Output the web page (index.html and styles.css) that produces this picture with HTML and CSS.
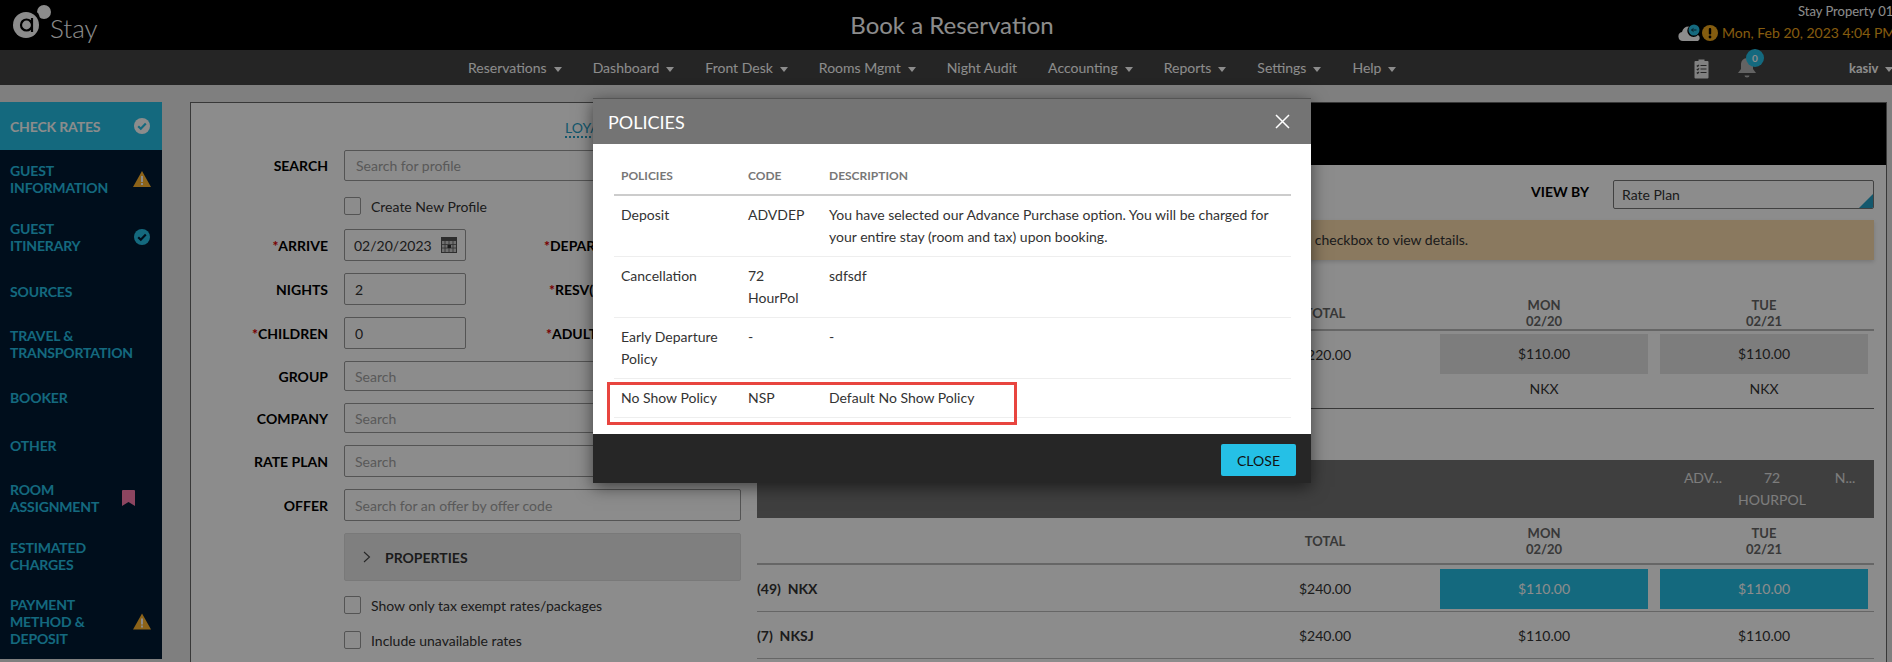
FILE: index.html
```html
<!DOCTYPE html>
<html lang="en">
<head>
<meta charset="utf-8">
<title>Book a Reservation</title>
<link rel="stylesheet" href="styles.css">
</head>
<body>
<header class="topbar">
  <div class="logo">
    <svg class="logo-mark" width="40" height="34" viewBox="0 0 40 34"><circle cx="13" cy="20" r="13" fill="#fff"/><circle cx="31" cy="7" r="7" fill="#fff"/><path d="M19 13v14M19 20a5.500 5.500 0 1 1-11 0 5.500 5.500 0 0 1 11 0z" fill="none" stroke="#000" stroke-width="2.200"/><path d="M24 8a13 13 0 0 1 2 7" fill="none" stroke="#000" stroke-width="2"/></svg>
    <span class="logo-text">Stay</span>
  </div>
  <h1 class="page-title">Book a Reservation</h1>
  <div class="prop">
    <div class="prop-name">Stay Property 01</div>
    <div class="prop-date">
      <svg width="24" height="18" viewBox="0 0 24 18"><path d="M5 17a4.500 4.500 0 0 1-1-8.900A7 7 0 0 1 11 2.500a6 6 0 0 0 9 8.500 3.500 3.500 0 0 1 0 6z" fill="#fff"/><circle cx="16" cy="6" r="5.500" fill="#25c0e6"/><path d="M13.500 6h5M13.500 6l2-1.600M13.500 6l2 1.600" stroke="#0a3a4a" stroke-width="1" fill="none"/></svg>
      <svg width="16" height="16" viewBox="0 0 16 16"><circle cx="8" cy="8" r="8" fill="#f0a81d"/><rect x="6.800" y="3" width="2.400" height="6.500" rx="1" fill="#000"/><circle cx="8" cy="12" r="1.400" fill="#000"/></svg>
      <span>Mon, Feb 20, 2023 4:04 PM</span>
    </div>
  </div>
</header>
<nav class="navbar">
  <ul class="menu">
    <li class="caret">Reservations</li>
    <li class="caret">Dashboard</li>
    <li class="caret">Front Desk</li>
    <li class="caret">Rooms Mgmt</li>
    <li>Night Audit</li>
    <li class="caret">Accounting</li>
    <li class="caret">Reports</li>
    <li class="caret">Settings</li>
    <li class="caret">Help</li>
  </ul>
  <div class="nav-right">
    <svg class="nav-clip" width="15" height="21" viewBox="0 0 15 21"><path d="M1.500 3h3V1.500h6V3h3a1 1 0 0 1 1 1v15.500a1 1 0 0 1-1 1h-12a1 1 0 0 1-1-1V4a1 1 0 0 1 1-1z" fill="#fff"/><path d="M6.500 7.500h6M6.500 11h6M6.500 14.500h6M2.800 7.500l1 1 1.200-1.800M2.800 11l1 1 1.200-1.800M2.800 14.500l1 1 1.200-1.800" stroke="#444" stroke-width="1.100" fill="none"/></svg>
    <div class="bell">
      <svg width="18" height="22" viewBox="0 0 18 22"><path d="M9 1a6 6 0 0 1 6 6v5l3 4H0l3-4V7a6 6 0 0 1 6-6z" fill="#fff" opacity=".6"/><path d="M6.500 18.500h5a2.500 2 0 0 1-5 0z" fill="#fff" opacity=".6"/></svg>
      <span class="badge">0</span>
    </div>
    <div class="user caret">kasiv</div>
  </div>
</nav>
<div class="page">
  <aside class="sidebar">
    <div class="step step-active"><span>CHECK RATES</span><svg class="ic" width="16" height="16" viewBox="0 0 16 16"><circle cx="8" cy="8" r="8" fill="#fff"/><path d="M4.200 8.200l2.600 2.600 5-5.200" fill="none" stroke="#25c0e6" stroke-width="2.200"/></svg></div>
    <div class="step"><span>GUEST<br>INFORMATION</span><svg class="ic warn" width="18" height="16" viewBox="0 0 18 16"><path d="M9 0l9 16H0z" fill="#ffb52e"/><rect x="8" y="5" width="2" height="6" fill="#fff"/><rect x="8" y="12" width="2" height="2" fill="#fff"/></svg></div>
    <div class="step"><span>GUEST<br>ITINERARY</span><svg class="ic" width="16" height="16" viewBox="0 0 16 16"><circle cx="8" cy="8" r="8" fill="#25c0e6"/><path d="M4.200 8.200l2.600 2.600 5-5.200" fill="none" stroke="#001a33" stroke-width="2.200"/></svg></div>
    <div class="step"><span>SOURCES</span></div>
    <div class="step"><span>TRAVEL &amp;<br>TRANSPORTATION</span></div>
    <div class="step"><span>BOOKER</span></div>
    <div class="step"><span>OTHER</span></div>
    <div class="step"><span>ROOM<br>ASSIGNMENT</span><svg class="ic mark" width="13" height="16" viewBox="0 0 13 16"><path d="M0 1a1 1 0 0 1 1-1h11a1 1 0 0 1 1 1v15l-6.500-4L0 16z" fill="#ff7fb0"/></svg></div>
    <div class="step"><span>ESTIMATED<br>CHARGES</span></div>
    <div class="step"><span>PAYMENT<br>METHOD &amp;<br>DEPOSIT</span><svg class="ic warn" width="18" height="17" viewBox="0 0 18 16"><path d="M9 0l9 16H0z" fill="#ffb52e"/><rect x="8" y="5" width="2" height="6" fill="#fff"/><rect x="8" y="12" width="2" height="2" fill="#fff"/></svg></div>
  </aside>
  <main class="panel">
    <section class="search-col">
      <div class="loyalty"><a class="loyalty-link">LOYALTY</a></div>
      <form class="form">
        <div class="row"><label class="lbl">SEARCH</label><input class="field field-top" placeholder="Search for profile"></div>
        <div class="check row-create"><span class="box"></span><span>Create New Profile</span></div>
        <div class="row"><label class="lbl"><b class="req">*</b>ARRIVE</label><div class="date-field"><span>02/20/2023</span><svg width="16" height="16" viewBox="0 0 16 16"><rect x=".5" y=".5" width="15" height="15" fill="#ccc" stroke="#555"/><rect x=".5" y=".5" width="15" height="3.500" fill="#555"/><path d="M4 4v11M8 4v11M12 4v11M1 7.500h14M1 11h14" stroke="#555" stroke-width=".8"/><rect x="6.500" y="8" width="3.500" height="3" fill="#333"/></svg></div><label class="lbl2 lbl2-dep"><b class="req">*</b>DEPARTURE</label></div>
        <div class="row"><label class="lbl">NIGHTS</label><input class="field field-short" value="2"><label class="lbl2 lbl2-resv"><b class="req">*</b>RESV(S)</label></div>
        <div class="row"><label class="lbl"><b class="req">*</b>CHILDREN</label><input class="field field-short" value="0"><label class="lbl2 lbl2-adu"><b class="req">*</b>ADULTS</label></div>
        <div class="row"><label class="lbl">GROUP</label><input class="field field-thin" placeholder="Search"></div>
        <div class="row"><label class="lbl">COMPANY</label><input class="field field-thin" placeholder="Search"></div>
        <div class="row"><label class="lbl">RATE PLAN</label><input class="field" placeholder="Search"></div>
        <div class="row"><label class="lbl">OFFER</label><input class="field" placeholder="Search for an offer by offer code"></div>
        <div class="props"><svg width="8" height="12" viewBox="0 0 8 12"><path d="M1 1l5.500 5L1 11" fill="none" stroke="#444" stroke-width="1.100"/></svg><span>PROPERTIES</span></div>
        <div class="check row-tax"><span class="box"></span><span>Show only tax exempt rates/packages</span></div>
        <div class="check row-inc"><span class="box"></span><span>Include unavailable rates</span></div>
      </form>
    </section>
    <section class="rates-col">
      <div class="band"></div>
      <div class="rates">
        <div class="viewby"><span class="viewby-lbl">VIEW BY</span><div class="select">Rate Plan</div></div>
        <div class="alert">Select a rate plan checkbox to view details.</div>
        <div class="grid grid-head grid-head-a">
          <div class="th-total">TOTAL</div>
          <div class="th-day day-a">MON<br><span>02/20</span></div>
          <div class="th-day day-b">TUE<br><span>02/21</span></div>
        </div>
        <div class="grid grid-sel">
          <div class="td-total">$220.00</div>
          <div class="cell cell-grey day-a">$110.00</div>
          <div class="cell cell-grey day-b">$110.00</div>
          <div class="code day-a">NKX</div>
          <div class="code day-b">NKX</div>
        </div>
        <div class="bar">
          <span class="bar-a">ADV...</span>
          <span class="bar-b">72<br>HOURPOL</span>
          <span class="bar-c">N...</span>
        </div>
        <div class="grid grid-head grid-head-b">
          <div class="th-total">TOTAL</div>
          <div class="th-day day-a">MON<br><span>02/20</span></div>
          <div class="th-day day-b">TUE<br><span>02/21</span></div>
        </div>
        <div class="grid grid-row">
          <div class="td-name"><b>(49)&nbsp; NKX</b></div>
          <div class="td-total">$240.00</div>
          <div class="cell cell-teal day-a">$110.00</div>
          <div class="cell cell-teal day-b">$110.00</div>
        </div>
        <div class="grid grid-row">
          <div class="td-name"><b>(7)&nbsp; NKSJ</b></div>
          <div class="td-total">$240.00</div>
          <div class="cell day-a">$110.00</div>
          <div class="cell day-b">$110.00</div>
        </div>
      </div>
    </section>
  </main>
</div>
<div class="backdrop"></div>
<div class="modal">
  <div class="modal-head"><span>POLICIES</span>
    <svg width="15" height="15" viewBox="0 0 15 15"><path d="M1 1l13 13M14 1L1 14" stroke="#fff" stroke-width="1.500"/></svg>
  </div>
  <div class="modal-body">
    <table class="policy">
      <thead><tr><th class="c1">POLICIES</th><th class="c2">CODE</th><th>DESCRIPTION</th></tr></thead>
      <tbody>
        <tr><td>Deposit</td><td>ADVDEP</td><td>You have selected our Advance Purchase option. You will be charged for your entire stay (room and tax) upon booking.</td></tr>
        <tr><td>Cancellation</td><td>72 HourPol</td><td>sdfsdf</td></tr>
        <tr><td>Early Departure Policy</td><td>-</td><td>-</td></tr>
        <tr><td>No Show Policy</td><td>NSP</td><td>Default No Show Policy</td></tr>
      </tbody>
    </table>
    <div class="highlight"></div>
  </div>
  <div class="modal-foot"><button class="close-btn" type="button">CLOSE</button></div>
</div>
</body>
</html>
```
FILE: styles.css
```css
* { box-sizing: border-box; }
html, body { margin: 0; height: 662px; overflow: hidden; }
body { font-family: Lato, "Liberation Sans", sans-serif; font-size: 14px; color: #333; background: #e8e8e8; position: relative; }

.topbar { height: 50px; background: #000; display: flex; align-items: center; position: relative; color: #fff; }
.logo { display: flex; align-items: center; padding-left: 13px; margin-top: -2px; }
.logo-mark { margin-top: -4px; }
.logo-text { font-size: 26px; font-weight: 300; margin: 8px 0 0 -3px; }
.page-title { position: absolute; left: 0; right: 0; margin: 0 0 0 12px; text-align: center; font-size: 24px; font-weight: 400; line-height: 50px; }
.prop { position: absolute; left: 1678px; top: 3px; width: 214px; overflow: hidden; white-space: nowrap; }
.prop-name { font-size: 13px; line-height: 17px; padding-left: 120px; }
.prop-date { display: flex; align-items: center; font-size: 14px; line-height: 20px; margin-top: 3px; color: #f0a81d; }
.prop-date svg { flex: none; }
.prop-date span { margin-left: 4px; }

.navbar { height: 35px; background: #444; color: #fff; display: flex; align-items: center; position: relative; }
.menu { list-style: none; margin: 0; padding: 0 0 0 468px; display: flex; gap: 31px; font-size: 14px; white-space: nowrap; }
.caret::after { content: ""; display: inline-block; margin-left: 7px; vertical-align: middle; border: 4px solid transparent; border-top: 5px solid currentColor; border-bottom: 0; }
.nav-right { position: absolute; left: 1694px; top: 0; height: 35px; display: flex; align-items: center; white-space: nowrap; }
.nav-clip { margin-top: 1px; opacity: .9; }
.bell { position: relative; margin-left: 29px; height: 22px; }
.badge { position: absolute; left: 8px; top: -8px; width: 18px; height: 18px; border-radius: 50%; background: #25c0e6; font-size: 10px; font-weight: 700; text-align: center; line-height: 18px; }
.user { margin-left: 93px; font-weight: 700; font-size: 13px; }

.page { display: flex; align-items: flex-start; padding-top: 17px; gap: 28px; }
.sidebar { width: 162px; height: 557px; flex: none; background: #001a33; color: #25c0e6; display: grid; grid-template-rows: 48px 58px 58px 50px 55px 52px 44px 61px 55px 76px; }
.step { display: flex; align-items: center; justify-content: space-between; padding: 0 12px 0 10px; font-weight: 700; font-size: 14px; line-height: 17px; letter-spacing: -.15px; }
.step-active { background: #25c0e6; color: #fff; }
.ic { flex: none; }
.ic.warn { margin-right: -1px; }
.ic.mark { margin-right: 15px; }

.panel { width: 1697px; height: 560px; flex: none; background: #fff; border: 1px solid #666; border-bottom: 0; display: flex; }
.search-col { width: 566px; flex: none; position: relative; }
.loyalty { height: 47px; padding: 16px 0 0 374px; }
.loyalty-link { color: #25a0c6; font-size: 14px; border-bottom: 2px dotted #25a0c6; }
.form { display: flex; flex-direction: column; gap: 12px; padding-left: 153px; }
.row { display: flex; align-items: center; white-space: nowrap; margin-left: -153px; }
.lbl { width: 137px; margin-right: 16px; text-align: right; font-weight: 700; color: #000; flex: none; }
.lbl2 { font-weight: 700; color: #000; }
.lbl2-dep { margin-left: 78px; }
.lbl2-resv { margin-left: 83px; }
.lbl2-adu { margin-left: 80px; }
.req { color: #d00; }
.field { width: 397px; height: 32px; border: 1px solid #999; border-radius: 2px; background: #fff; padding: 0 10px; font: 14px Lato, sans-serif; color: #333; outline: 0; }
.field::placeholder { color: #a3a3a3; opacity: 1; }
.field-top { height: 31px; padding: 0 11px; }
.field-short { width: 122px; }
.field-thin { height: 30px; }
.date-field { width: 122px; height: 32px; border: 1px solid #999; border-radius: 2px; padding: 0 8px 0 9px; display: flex; align-items: center; justify-content: space-between; }
.check { display: flex; align-items: center; gap: 10px; height: 18px; }
.box { width: 17px; height: 18px; border: 1px solid #999; border-radius: 2px; background: #fff; flex: none; }
.row-create { margin: 4px 0 2px; }
.row-tax { margin-top: 3px; }
.row-inc { margin-top: 5px; }
.props { height: 48px; width: 397px; background: #e8e8e8; border: 1px solid #ddd; border-radius: 2px; display: flex; align-items: center; gap: 14px; padding-left: 18px; font-weight: 700; color: #333; }

.rates-col { flex: 1; display: flex; flex-direction: column; }
.band { height: 62px; background: #000; }
.rates { padding: 15px 12px 0 0; }
.viewby { display: flex; justify-content: flex-end; align-items: flex-start; gap: 24px; }
.viewby-lbl { font-weight: 700; color: #000; margin-top: 3px; }
.select { width: 261px; height: 29px; border: 1px solid #777; border-radius: 2px; padding: 0 8px; line-height: 28px; position: relative; overflow: hidden; }
.select::after { content: ""; position: absolute; right: 0; bottom: 0; border-style: solid; border-width: 0 0 14px 14px; border-color: transparent transparent #25a0c6 transparent; }
.alert { margin-top: 11px; height: 40px; background: #fcddae; line-height: 40px; padding-left: 449px; box-shadow: 0 2px 4px rgba(0,0,0,.15); white-space: nowrap; }
.grid { display: grid; grid-template-columns: 1fr 114px 58px 208px 12px 208px; padding-right: 6px; }
.grid-head { height: 47px; border-bottom: 2px solid #bbb; align-items: center; font-size: 13px; color: #666; text-align: center; line-height: 16px; }
.grid-head-a { margin-top: 24px; padding-top: 12px; }
.th-total { grid-column: 2; font-weight: 700; }
.th-day { font-weight: 700; }
.grid-sel { padding-top: 3px; height: 78px; border-bottom: 1px solid #666; row-gap: 4px; grid-template-rows: 40px 20px; align-items: center; text-align: center; margin-bottom: 51px; }
.td-total { grid-column: 2; grid-row: 1; text-align: center; }
.cell { height: 40px; line-height: 40px; text-align: center; grid-row: 1; }
.day-a { grid-column: 4; }
.day-b { grid-column: 6; }
.cell-grey { background: #e3e3e3; }
.code { grid-row: 2; }
.bar { height: 58px; background: #747474; color: #fff; display: flex; justify-content: flex-end; align-items: flex-start; padding-top: 7px; line-height: 22px; text-align: center; }
.bar-a { width: 60px; margin-right: -5px; opacity: .8; }
.bar-b { width: 88px; margin-right: 14px; opacity: .8; }
.bar-c { width: 30px; margin-right: 14px; opacity: .8; }
.grid-row { height: 47px; border-bottom: 1px solid #bbb; align-items: center; padding-top: 1px; }
.td-name { grid-column: 1; grid-row: 1; white-space: nowrap; }
.td-name b { color: #333; }
.cell-teal { background: #25c0e6; color: #fff; }

.backdrop { position: absolute; inset: 0; background: rgba(0,0,0,.45); }
.modal { position: absolute; left: 593px; top: 98px; width: 718px; height: 385px; box-shadow: 0 4px 16px rgba(0,0,0,.55); display: flex; flex-direction: column; }
.modal-head { height: 46px; flex: none; background: #747474; border-top: 1px solid #555; color: #fff; display: flex; align-items: center; justify-content: space-between; padding: 0 21px 0 15px; font-size: 18px; }
.modal-body { flex: 1; background: #fff; position: relative; padding: 0 20px 0 21px; }
.policy { width: 677px; border-collapse: collapse; table-layout: fixed; font-size: 14px; line-height: 22px; color: #333; }
.policy th { height: 51px; padding: 14px 7px 0; text-align: left; font-size: 12px; font-weight: 700; color: #777; border-bottom: 2px solid #ccc; }
.policy .c1 { width: 127px; }
.policy .c2 { width: 81px; }
.policy td { padding: 8px 7px; vertical-align: top; border-bottom: 1px solid #eee; }
.highlight { position: absolute; left: 14px; top: 238px; width: 410px; height: 43px; border: 3px solid #e8453f; }
.modal-foot { height: 49px; flex: none; background: #262626; display: flex; justify-content: flex-end; padding: 10px 15px 0 0; }
.close-btn { width: 75px; height: 32px; border: 0; border-radius: 2px; background: #25c0e6; color: #111; font: 14px Lato, sans-serif; }
```
